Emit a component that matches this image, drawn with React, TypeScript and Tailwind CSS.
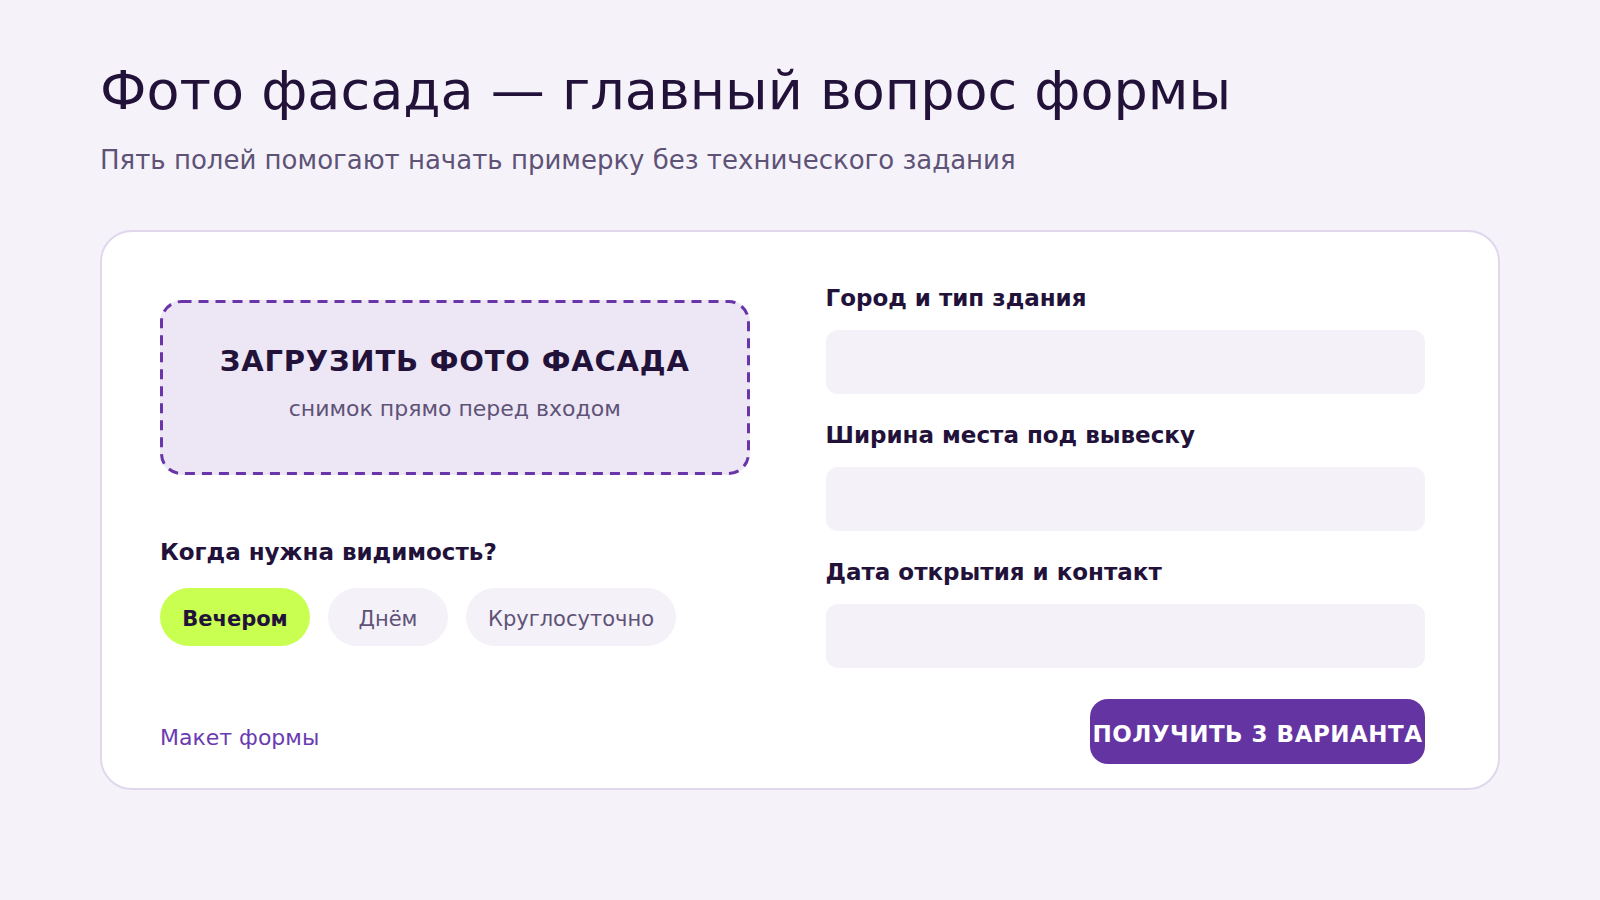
import React from "react";

export default function App() {
  return (
    <div
      className="min-h-screen w-full bg-[#f5f2f9] px-[100px] pt-[59px]"
      style={{ fontFamily: '"DejaVu Sans", "Noto Sans", sans-serif' }}
    >
      <h1 className="text-[54px] leading-[1.2] font-normal text-[#22123a] whitespace-nowrap">
        Фото фасада — главный вопрос формы
      </h1>
      <p className="mt-[18px] text-[26px] leading-[36px] text-[#5e5377] whitespace-nowrap">
        Пять полей помогают начать примерку без технического задания
      </p>

      <div className="mt-[52px] h-[560px] w-[1400px] rounded-[32px] border-2 border-[#e0d7ed] bg-white pl-[58px] pr-[73px] pt-[52px]">
        <div className="flex gap-[76px]">
          <div className="w-[590px]">
            <div className="relative mt-[16px] flex h-[175px] flex-col items-center justify-center rounded-[22px] bg-[#ede6f5] pb-[9px]">
              <svg className="pointer-events-none absolute inset-0 h-full w-full" width="590" height="175">
                <rect
                  x="1.5"
                  y="1.5"
                  width="587"
                  height="172"
                  rx="20"
                  ry="20"
                  fill="none"
                  stroke="#6a35a8"
                  strokeWidth="3"
                  strokeDasharray="10 7"
                />
              </svg>
              <div className="text-[29px] font-bold leading-[36px] tracking-[0.8px] text-[#22123a] whitespace-nowrap">
                ЗАГРУЗИТЬ ФОТО ФАСАДА
              </div>
              <div className="mt-[16px] text-[22px] leading-[28px] text-[#5e5377] whitespace-nowrap">
                снимок прямо перед входом
              </div>
            </div>
            <div className="mt-[63px] text-[23px] font-bold leading-[28px] text-[#22123a] whitespace-nowrap">
              Когда нужна видимость?
            </div>
            <div className="mt-[22px] flex gap-[18px]">
              <div className="flex h-[58px] w-[150px] items-center justify-center rounded-full bg-[#c8ff50] pt-[5px] text-[21px] font-bold text-[#22123a]">
                Вечером
              </div>
              <div className="flex h-[58px] w-[120px] items-center justify-center rounded-full bg-[#f4f1f8] pt-[5px] text-[21px] text-[#5e5377]">
                Днём
              </div>
              <div className="flex h-[58px] w-[210px] items-center justify-center rounded-full bg-[#f4f1f8] pt-[5px] text-[21px] text-[#5e5377]">
                Круглосуточно
              </div>
            </div>
          </div>

          <div className="flex w-[600px] flex-col gap-[27px]">
            {["Город и тип здания", "Ширина места под вывеску", "Дата открытия и контакт"].map((label) => (
              <div key={label} className="flex flex-col">
                <div className="text-[23px] font-bold leading-[28px] text-[#22123a] whitespace-nowrap">
                  {label}
                </div>
                <div className="mt-[18px] h-[64px] rounded-[12px] bg-[#f4f1f8]" />
              </div>
            ))}
          </div>
        </div>

        <div className="mt-[31px] flex items-center justify-between">
          <div className="pt-[13px] text-[22px] leading-[30px] text-[#6a3bb0] whitespace-nowrap">Макет формы</div>
          <div className="flex h-[65px] w-[335px] items-center justify-center rounded-[18px] bg-[#6534a3] pt-[5px] text-[23px] font-bold tracking-[0.5px] text-white whitespace-nowrap">
            ПОЛУЧИТЬ 3 ВАРИАНТА
          </div>
        </div>
      </div>
    </div>
  );
}
